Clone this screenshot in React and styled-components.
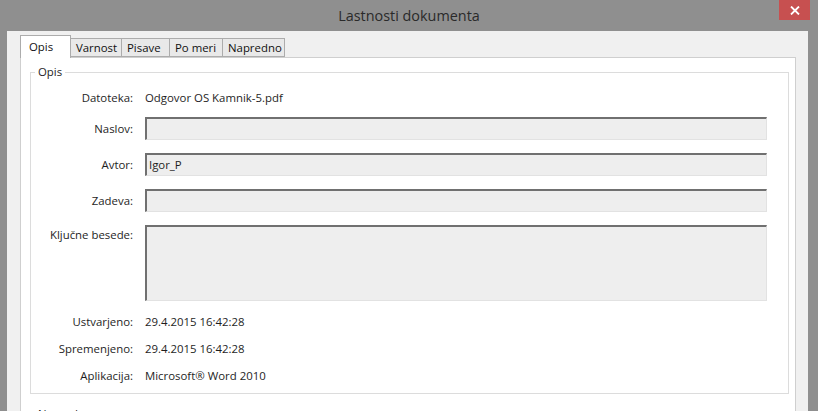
import React from 'react'
import styled, { createGlobalStyle } from 'styled-components'

const GlobalStyle = createGlobalStyle`
  body {
    margin: 0;
    font-family: "Open Sans", "Noto Sans", sans-serif;
    font-size: 11.4px;
    color: #1e1e1e;
  }
`;

const Window = styled.div`
  width: 818px;
  height: 411px;
  display: flex;
  flex-direction: column;
  background: #8f8f8f;
  overflow: hidden;
`;

const TitleBar = styled.div`
  height: 31px;
  flex: none;
  display: grid;
  grid-template-columns: 1fr auto 1fr;
  align-items: start;
`;

const Title = styled.div`
  grid-column: 2;
  font-size: 14.4px;
  line-height: 31px;
  color: #2a2a2a;
`;

const CloseButton = styled.div`
  grid-column: 3;
  justify-self: end;
  margin-right: 8px;
  width: 31px;
  height: 20px;
  background: #c75050;
  display: flex;
  align-items: center;
  justify-content: center;
`;

const Body = styled.div`
  flex: 1;
  margin: 0 10px 0 7px;
  padding: 4px 12px 0 13px;
  background: #f0f0f0;
  display: flex;
  flex-direction: column;
`;

const TabStrip = styled.div`
  display: flex;
  align-items: flex-end;
  height: 22px;
  position: relative;
  z-index: 1;
`;

const Tab = styled.div`
  box-sizing: border-box;
  width: ${p => p.$w}px;
  height: ${p => (p.$active ? 23 : 19)}px;
  margin-bottom: ${p => (p.$active ? -1 : 0)}px;
  padding-left: ${p => (p.$active ? 8 : 5)}px;
  line-height: ${p => (p.$active ? 21 : 18)}px;
  background: ${p => (p.$active ? '#ffffff' : '#e9e9e9')};
  border: 1px solid #acacac;
  border-bottom: ${p => (p.$active ? 'none' : '1px solid #acacac')};
  border-left: ${p => (p.$first || p.$active ? '1px solid #acacac' : 'none')};
  color: #111;
  white-space: nowrap;
  overflow: hidden;
`;

const Panel = styled.div`
  flex: 1;
  background: #ffffff;
  border: 1px solid #cfcfcf;
  padding: 14px 6px 0 9px;
`;

const Group = styled.div`
  position: relative;
  border: 1px solid #dcdcdc;
  padding: 15px 21px 7px 0;
  margin-top: ${p => p.$mt || 0}px;
  min-height: 10px;
`;

const Legend = styled.span`
  position: absolute;
  top: -10px;
  left: 4px;
  padding: 0 3px;
  background: #ffffff;
  line-height: 18px;
  color: #1e1e1e;
`;

const Row = styled.div`
  display: grid;
  grid-template-columns: 102px 622px;
  column-gap: 12px;
  margin-top: ${p => p.$mt || 0}px;
`;

const Label = styled.div`
  text-align: right;
  line-height: 20px;
  align-self: ${p => (p.$top ? 'start' : 'center')};
  white-space: nowrap;
`;

const Value = styled.div`
  line-height: 20px;
  white-space: nowrap;
`;

const Field = styled.div`
  box-sizing: border-box;
  height: ${p => p.$h || 23}px;
  background: #eeeeee;
  border-style: solid;
  border-width: 2px 1px 1px 2px;
  border-color: #707070 #e2e2e2 #e2e2e2 #707070;
  padding: 0 2px;
  line-height: 20px;
`;

function CloseIcon() {
  return (
    <svg width="10" height="9" viewBox="0 0 10 9">
      <path d="M1 0.5 L9 8.5 M9 0.5 L1 8.5" stroke="#ffffff" strokeWidth="1.8" />
    </svg>
  );
}

const tabs = [
  { name: 'Opis', w: 51, active: true },
  { name: 'Varnost', w: 51 },
  { name: 'Pisave', w: 48 },
  { name: 'Po meri', w: 53 },
  { name: 'Napredno', w: 62 },
];

export default function App() {
  return (
    <Window>
      <GlobalStyle />
      <TitleBar>
        <Title>Lastnosti dokumenta</Title>
        <CloseButton><CloseIcon /></CloseButton>
      </TitleBar>
      <Body>
        <TabStrip>
          {tabs.map((t, i) => (
            <Tab key={t.name} $w={t.w} $active={t.active} $first={i === 0}>{t.name}</Tab>
          ))}
        </TabStrip>
        <Panel>
          <Group>
            <Legend>Opis</Legend>
            <Row>
              <Label>Datoteka:</Label>
              <Value>Odgovor OS Kamnik-5.pdf</Value>
            </Row>
            <Row $mt={9}>
              <Label>Naslov:</Label>
              <Field />
            </Row>
            <Row $mt={13}>
              <Label>Avtor:</Label>
              <Field>Igor_P</Field>
            </Row>
            <Row $mt={13}>
              <Label>Zadeva:</Label>
              <Field />
            </Row>
            <Row $mt={13}>
              <Label $top>Ključne besede:</Label>
              <Field $h={76} />
            </Row>
            <Row $mt={11}>
              <Label>Ustvarjeno:</Label>
              <Value>29.4.2015 16:42:28</Value>
            </Row>
            <Row $mt={7}>
              <Label>Spremenjeno:</Label>
              <Value>29.4.2015 16:42:28</Value>
            </Row>
            <Row $mt={7}>
              <Label>Aplikacija:</Label>
              <Value>Microsoft® Word 2010</Value>
            </Row>
          </Group>
          <Group $mt={20}>
            <Legend>Napredno</Legend>
          </Group>
        </Panel>
      </Body>
    </Window>
  );
}
